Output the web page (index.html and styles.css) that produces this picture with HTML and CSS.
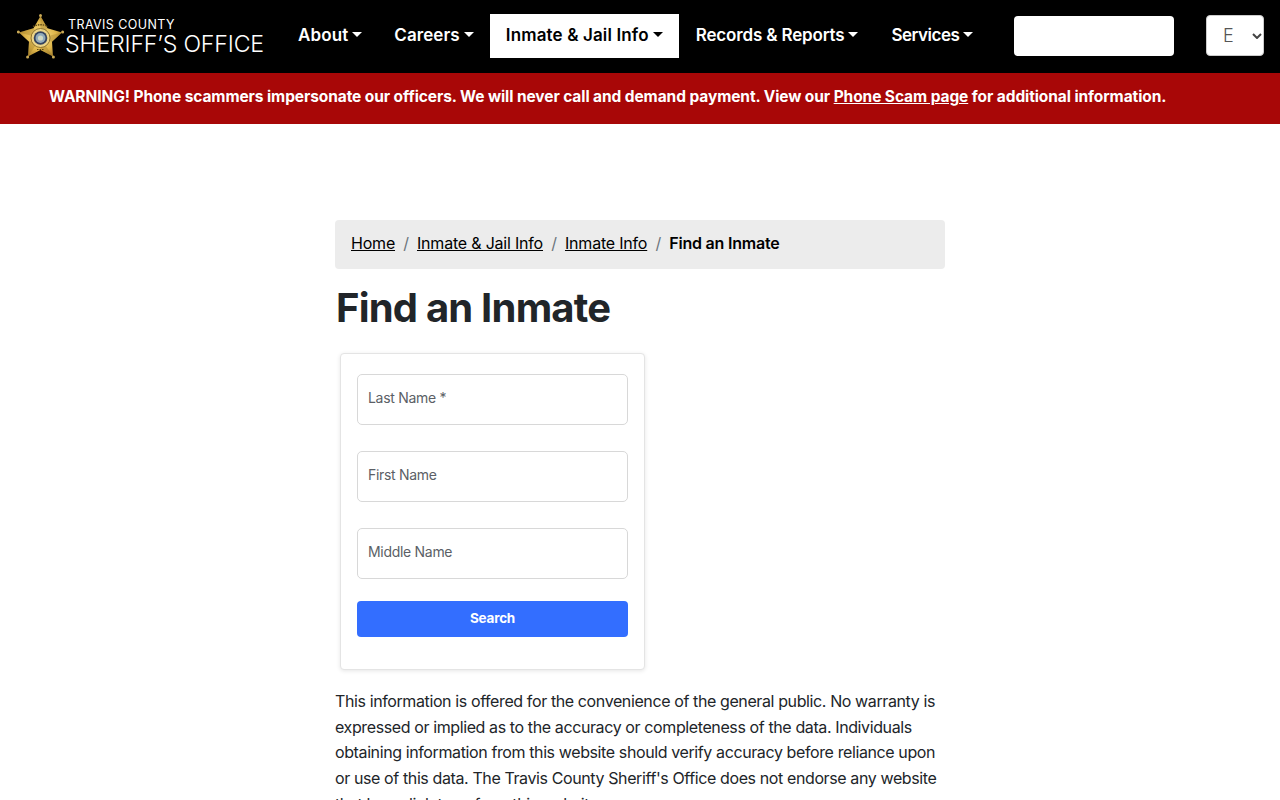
FILE: index.html
```html
<!DOCTYPE html>
<html lang="en">
<head>
<meta charset="utf-8">
<title>Find an Inmate</title>
<link rel="stylesheet" href="styles.css">
</head>
<body>
<header class="topbar">
  <a class="brand" href="#">
    <svg class="star" viewBox="0 0 48 48" width="48" height="48" aria-hidden="true">
      <defs>
        <radialGradient id="gold" cx="50%" cy="50%" r="55%">
          <stop offset="0" stop-color="#f8e08a"/>
          <stop offset="0.65" stop-color="#dfb64a"/>
          <stop offset="1" stop-color="#a98430"/>
        </radialGradient>
      </defs>
      <polygon points="23.5,3 30.5,15.3 45,19.5 35,28.7 36,43.5 23.5,37 11,43.5 12,28.7 2,19.5 16.5,15.3" fill="url(#gold)"/>
      <path d="M23.5 3L30.5 15.3 23.5 25zM45 19.5L35 28.7 23.5 25zM36 43.5L23.5 37 23.5 25zM11 43.5L12 28.7 23.5 25zM2 19.5L16.5 15.3 23.5 25z" fill="#8f6d20" opacity=".3"/>
      <circle cx="23.5" cy="2.6" r="1.5" fill="#c9a956"/>
      <circle cx="45.6" cy="19" r="1.5" fill="#c9a956"/>
      <circle cx="36.4" cy="44" r="1.5" fill="#c9a956"/>
      <circle cx="10.6" cy="44" r="1.5" fill="#c9a956"/>
      <circle cx="1.4" cy="19" r="1.5" fill="#c9a956"/>
      <path d="M16 13.5Q23.5 10 31 13.5" fill="none" stroke="#5c4713" stroke-width="1.4" stroke-dasharray="1.5 1"/>
      <path d="M20 36.5H27" stroke="#5c4713" stroke-width="1.2" stroke-dasharray="1.5 1"/>
      <circle cx="23.5" cy="25" r="9.5" fill="#ecd487" stroke="#7a5e1c" stroke-width=".8"/>
      <circle cx="23.5" cy="25" r="6.8" fill="#35435e"/>
      <circle cx="23.5" cy="25" r="5" fill="#8fa9ba"/>
      <circle cx="23.5" cy="25" r="2.6" fill="#cfd8c4"/>
    </svg>
    <span class="brand-text">
      <span class="brand-top">TRAVIS COUNTY</span>
      <span class="brand-main">SHERIFF’S OFFICE</span>
    </span>
  </a>
  <nav class="nav">
    <a class="nav-link" href="#">About<i class="caret"></i></a>
    <a class="nav-link" href="#">Careers<i class="caret"></i></a>
    <a class="nav-link active" href="#">Inmate &amp; Jail Info<i class="caret"></i></a>
    <a class="nav-link records" href="#">Records &amp; Reports<i class="caret"></i></a>
    <a class="nav-link services" href="#">Services<i class="caret"></i></a>
  </nav>
  <div class="searchbox"></div>
  <div class="lang"><span>E</span>
    <svg viewBox="0 0 10 6" width="10" height="6" aria-hidden="true"><path d="M1 1l4 4 4-4" fill="none" stroke="#444" stroke-width="2"/></svg>
  </div>
</header>
<div class="alert">WARNING! Phone scammers impersonate our officers. We will never call and demand payment. View our <a href="#">Phone Scam page</a> for additional information.</div>
<main class="content">
  <ol class="crumbs">
    <li><a href="#">Home</a></li>
    <li class="sep">/</li>
    <li><a href="#">Inmate &amp; Jail Info</a></li>
    <li class="sep">/</li>
    <li><a href="#">Inmate Info</a></li>
    <li class="sep">/</li>
    <li class="current">Find an Inmate</li>
  </ol>
  <h1>Find an Inmate</h1>
  <form class="card">
    <div class="field first">Last Name *</div>
    <div class="field">First Name</div>
    <div class="field">Middle Name</div>
    <button class="btn" type="button">Search</button>
  </form>
  <p class="note">This information is offered for the convenience of the general public. No warranty is<br>expressed or implied as to the accuracy or completeness of the data. Individuals<br>obtaining information from this website should verify accuracy before reliance upon<br>or use of this data. The Travis County Sheriff's Office does not endorse any website<br>that has a link to or from this website.</p>
</main>
</body>
</html>
```
FILE: styles.css
```css
* { box-sizing: border-box; }
html, body { height: 800px; overflow: hidden; }
body { margin: 0; background: #fff; color: #212529; font-family: Inter, "Liberation Sans", sans-serif; }
a { color: inherit; }
.topbar { height: 73px; background: #000; display: flex; align-items: center; padding: 0 0 2px 17px; }
.brand { display: flex; align-items: center; width: 265px; text-decoration: none; color: #fff; }
.star { flex: none; margin-top: 3px; }
.brand-text { display: flex; flex-direction: column; margin: 4px 0 0 0; }
.brand-top { font-size: 12.5px; line-height: 14px; margin-left: 3px; letter-spacing: .4px; }
.brand-main { font-size: 23.2px; line-height: 25px; font-weight: 300; letter-spacing: -.2px; white-space: nowrap; }
.nav { display: flex; width: 700px; flex: none; }
.nav-link { flex: none; white-space: nowrap; height: 44px; padding: 0 16px 2px; display: flex; align-items: center; color: #fff; font-size: 17px; font-weight: 600; text-decoration: none; letter-spacing: .1px; }
.nav-link.active { background: #fff; color: #000; letter-spacing: .14px; }
.nav-link.records { letter-spacing: -.16px; margin-left: 1px; }
.nav-link.services { letter-spacing: -.5px; margin-left: 1px; }
.caret { display: block; width: 0; height: 0; margin-left: 4px; border-left: 5px solid transparent; border-right: 5px solid transparent; border-top: 5px solid currentColor; }
.searchbox { flex: none; width: 160px; height: 40px; background: #fff; border-radius: 4px; margin-left: 32px; }
.lang { flex: none; width: 58px; height: 41px; margin-left: 32px; background: #fff; border-radius: 4px; border: 1px solid #ccc; display: flex; align-items: center; justify-content: space-between; padding: 0 1px 0 16px; color: #555; font-size: 18px; font-weight: 300; }
.alert { height: 51px; background: #a80707; color: #fff; padding: 0 0 4px 49px; display: flex; align-items: center; white-space: pre-wrap; font-size: 15.5px; font-weight: 700; letter-spacing: -.09px; }
.content { width: 610px; margin: 96px auto 0; }
.crumbs { list-style: none; margin: 0; padding: 0 16px 3px; height: 49px; display: flex; align-items: center; gap: 8.2px; background: #ececec; border-radius: 4px; font-size: 16px; color: #000; letter-spacing: -.2px; }
.sep { color: #6c757d; }
.current { font-weight: 600; }
h1 { margin: 15px 0 0; padding-left: 1px; font-size: 40px; line-height: 48px; font-weight: 700; letter-spacing: -.8px; }
.card { width: 305px; height: 317px; margin: 21px 0 0 5px; padding: 0 16px; background: #fff; border: 1px solid #e4e4e4; border-radius: 4px; box-shadow: 0 1px 4px rgba(0,0,0,.1); display: flex; flex-direction: column; }
.field { height: 51px; margin-top: 26px; padding: 0 10px 5px; display: flex; align-items: center; border: 1px solid #d8d8d8; border-radius: 5px; color: #5b5f66; font-size: 14px; letter-spacing: -.3px; }
.field.first { margin-top: 20px; }
.btn { height: 36px; margin-top: 22px; padding: 0 0 3px; border: 0; border-radius: 4px; background: #336eff; color: #fff; font: 700 13.5px Inter, "Liberation Sans", sans-serif; letter-spacing: -.2px; }
.note { margin: 19px 0 0; font-size: 16px; line-height: 25.7px; color: #212529; letter-spacing: -.39px; white-space: nowrap; }
```
